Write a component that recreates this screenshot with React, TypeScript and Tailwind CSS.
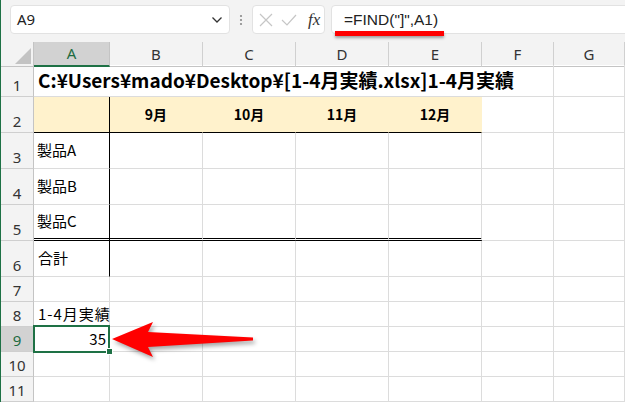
import React from "react";

const COLS = "grid grid-cols-[33px_76px_93px_93px_93px_93px_72px_1fr]";
const GRID = "border-r border-b border-[#dcdcdc]";
const CJK = { fontFamily: '"Noto Sans CJK JP", "Noto Sans", sans-serif' };
const UI = { fontFamily: '"Noto Sans", "Liberation Sans", sans-serif' };

function RowHead({ n, sel }: { n: number; sel?: boolean }) {
  return (
    <div
      className={
        "flex items-end justify-center pb-[3px] border-r border-b border-r-[#c4c4c4] border-b-[#cfcfcf] text-[15px] leading-4 " +
        (sel ? "bg-[#d2d2d2] text-[#1e6b41]" : "bg-[#f3f3f3] text-[#333]")
      }
      style={UI}
    >
      {n}
    </div>
  );
}

function Blank({ cls = GRID }: { cls?: string }) {
  return <div className={cls} />;
}

export default function App() {
  const colHeads = ["A", "B", "C", "D", "E", "F", "G"];
  return (
    <div className="relative w-[625px] h-[402px] overflow-hidden bg-white border-l border-[#1e7145]">
      {/* formula bar */}
      <div className="flex items-start h-[42px] bg-[#f3f3f3] pt-[5px] overflow-hidden" style={UI}>
        <div className="shrink-0 ml-[9px] w-[220px] h-[29px] bg-white border border-[#e2e2e2] rounded-[4px] flex items-center justify-between pl-[6px] pr-[6px]">
          <span className="text-[15px] text-[#222]">A9</span>
          <svg width="12" height="8" viewBox="0 0 12 8" className="mt-[1px]">
            <path d="M1.5 1.5 L6 6 L10.5 1.5" fill="none" stroke="#333" strokeWidth="1.3" />
          </svg>
        </div>
        <div className="shrink-0 w-[22px] h-[29px] flex items-center justify-center">
          <svg width="4" height="12" viewBox="0 0 4 12">
            <circle cx="2" cy="2" r="1.1" fill="#8a8a8a" />
            <circle cx="2" cy="6" r="1.1" fill="#8a8a8a" />
            <circle cx="2" cy="10" r="1.1" fill="#8a8a8a" />
          </svg>
        </div>
        <div className="shrink-0 w-[73px] h-[29px] bg-white border border-[#e2e2e2] rounded-[4px] flex items-center pl-[6px] gap-[8px]">
          <svg width="14" height="14" viewBox="0 0 14 14">
            <path d="M1 1 L13 13 M13 1 L1 13" stroke="#c6c6c6" strokeWidth="1.2" />
          </svg>
          <svg width="16" height="12" viewBox="0 0 16 12">
            <path d="M1 6 L6 11 L15 1" fill="none" stroke="#c6c6c6" strokeWidth="1.2" />
          </svg>
          <span
            className="text-[17px] italic text-[#333] ml-[3px] leading-none"
            style={{ fontFamily: '"Liberation Serif", serif' }}
          >
            fx
          </span>
        </div>
        <div className="shrink-0 ml-[6px] w-[320px] h-[29px] bg-white border border-[#e2e2e2] rounded-[4px] flex items-center pl-[12px]">
          <span className="text-[15.5px] text-[#222]" style={{ fontFamily: '"Liberation Sans", sans-serif' }}>
            =FIND("]",A1)
          </span>
        </div>
      </div>

      {/* column headers */}
      <div className={COLS + " h-[23px] bg-[#f3f3f3]"} style={UI}>
        <div className="relative border-r border-b border-[#c4c4c4]">
          <svg width="16" height="16" viewBox="0 0 16 16" className="absolute right-[2px] bottom-[2px]">
            <path d="M16 0 L16 16 L0 16 Z" fill="#c3c3c3" />
          </svg>
        </div>
        {colHeads.map((c, i) => (
          <div
            key={c}
            className={
              "flex items-center justify-center text-[15px] " +
              (i === 0
                ? "bg-[#d2d2d2] text-[#1e6b41] border-r border-r-[#c4c4c4] border-b-2 border-b-[#1e7145]"
                : "text-[#333] border-r border-b border-r-[#d0d0d0] border-b-[#c4c4c4]")
            }
          >
            {c}
          </div>
        ))}
      </div>

      {/* rows */}
      <div style={CJK} className="text-[15px] text-black">
        {/* row 1 */}
        <div className={COLS + " h-[32px]"}>
          <RowHead n={1} />
          <div className={"col-span-6 flex items-center pl-[4px] " + GRID}>
            <span className="whitespace-nowrap text-[19px] font-bold">
              C:¥Users¥mado¥Desktop¥[1-4月実績.xlsx]1-4月実績
            </span>
          </div>
          <Blank />
        </div>

        {/* row 2 */}
        <div className={COLS + " h-[36px]"}>
          <RowHead n={2} />
          <div className="bg-[#fff2cc] border-r border-b border-black" />
          {["9月", "10月", "11月", "12月"].map((m) => (
            <div
              key={m}
              className="bg-[#fff2cc] border-r border-r-[#fff2cc] border-b border-b-black flex items-center justify-center font-bold text-[14px]"
            >
              {m}
            </div>
          ))}
          <Blank />
          <Blank />
        </div>

        {/* rows 3-5 */}
        {["製品A", "製品B", "製品C"].map((p, idx) => {
          const last = idx === 2;
          const bottom = last ? " border-b-[3px] border-double border-b-black" : " border-b border-b-[#dcdcdc]";
          return (
            <div key={p} className={COLS + " h-[36px]"}>
              <RowHead n={idx + 3} />
              <div className={"flex items-center pl-[3px] border-r border-r-black" + bottom}>{p}</div>
              {[0, 1, 2, 3].map((k) => (
                <div key={k} className={"border-r border-r-[#dcdcdc]" + bottom} />
              ))}
              <Blank />
              <Blank />
            </div>
          );
        })}

        {/* row 6 */}
        <div className={COLS + " h-[36px]"}>
          <RowHead n={6} />
          <div className="flex items-center pl-[4px] border-r border-r-black border-b border-b-[#dcdcdc]">合計</div>
          <Blank />
          <Blank />
          <Blank />
          <Blank />
          <Blank />
          <Blank />
        </div>

        {/* row 7 */}
        <div className={COLS + " h-[25px]"}>
          <RowHead n={7} />
          {[0, 1, 2, 3, 4, 5, 6].map((k) => (
            <Blank key={k} />
          ))}
        </div>

        {/* row 8 */}
        <div className={COLS + " h-[25px]"}>
          <RowHead n={8} />
          <div className={"flex items-center pl-[4px] whitespace-nowrap tracking-[1px] " + GRID}>1-4月実績</div>
          {[0, 1, 2, 3, 4, 5].map((k) => (
            <Blank key={k} />
          ))}
        </div>

        {/* row 9 */}
        <div className={COLS + " h-[25px]"}>
          <RowHead n={9} sel />
          <div className={"relative flex items-center justify-end pr-[3px] " + GRID}>
            35
            <div className="absolute -left-[1px] -top-[2px] right-[-1px] bottom-[-2px] border-2 border-[#1e7145]" />
            <div className="absolute -right-[4px] -bottom-[4px] w-[7px] h-[7px] bg-[#1e7145] border border-white" />
          </div>
          {[0, 1, 2, 3, 4, 5].map((k) => (
            <Blank key={k} />
          ))}
        </div>

        {/* rows 10-11 */}
        {[10, 11].map((n) => (
          <div key={n} className={COLS + " h-[25px]"}>
            <RowHead n={n} />
            {[0, 1, 2, 3, 4, 5, 6].map((k) => (
              <Blank key={k} />
            ))}
          </div>
        ))}
      </div>

      {/* red underline under formula */}
      <div className="absolute left-[334px] top-[31px] w-[109px] h-[5px] bg-[#ff0000] shadow-[0_2px_3px_rgba(0,0,0,0.35)]" />

      {/* red arrow */}
      <svg
        className="absolute left-0 top-0 pointer-events-none"
        width="625"
        height="402"
        viewBox="0 0 625 402"
        style={{ filter: "drop-shadow(2px 3px 2px rgba(0,0,0,0.35))" }}
      >
        <polygon
          points="111,339 152,322 147,332 252,337.5 252,340.5 147,347 152,357"
          fill="#ff0000"
        />
      </svg>
    </div>
  );
}
